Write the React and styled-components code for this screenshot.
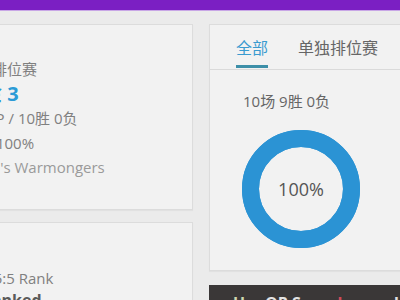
import styled, { createGlobalStyle } from 'styled-components';

const GlobalStyle = createGlobalStyle`
  body {
    margin: 0;
    background: #ebebeb;
    font-family: "Open Sans", "Noto Sans CJK SC", sans-serif;
    overflow: hidden;
  }
`;

const stats = [
  { label: '单独排位赛', kind: 'title' },
  { label: '白金 3', kind: 'tier' },
  { label: '100LP / 10胜 0负', kind: 'text' },
  { label: '胜率 100%', kind: 'text' },
  { label: "Riven's Warmongers", kind: 'league' },
];

const App = () => {
  const r = 50.5;
  const c = 2 * Math.PI * r;
  return (
    <>
      <GlobalStyle />
      <TopBar />
      <Main>
        <LeftColumn>
          <SummaryCard>
            {stats.map((s) => (
              <Line key={s.label} $kind={s.kind}>
                {s.label}
              </Line>
            ))}
          </SummaryCard>
          <FlexCard>
            <Line $kind="text">Flex 5:5 Rank</Line>
            <Unranked>Unranked</Unranked>
          </FlexCard>
        </LeftColumn>
        <RightColumn>
          <Card>
            <TabBar>
              <Tab $active>全部</Tab>
              <Tab>单独排位赛</Tab>
            </TabBar>
            <Body>
              <Record>10场 9胜 0负</Record>
              <Donut>
                <svg width="118" height="118" viewBox="0 0 118 118">
                  <circle cx="59" cy="59" r={r} fill="none" stroke="#2b93d4" strokeWidth="17" />
                  <circle
                    cx="59"
                    cy="59"
                    r={r}
                    fill="none"
                    stroke="#2b93d4"
                    strokeWidth="17"
                    strokeDasharray={`${c} ${c}`}
                  />
                </svg>
                <DonutLabel>100%</DonutLabel>
              </Donut>
            </Body>
          </Card>
          <DarkBar>
            <Badge>U</Badge>
            <Score>OP Score</Score>
            <Mark>l</Mark>
            <Rest>ranked</Rest>
          </DarkBar>
        </RightColumn>
      </Main>
    </>
  );
};
export default App;

const TopBar = styled.div`
  height: 10px;
  background: #7b1fc3;
  border-bottom: 1px solid #c8a6e6;
`;

const Main = styled.div`
  display: flex;
  gap: 16px;
  padding-top: 13px;
  margin-left: -100px;
`;

const LeftColumn = styled.div`
  width: 293px;
  flex-shrink: 0;
  display: flex;
  flex-direction: column;
  gap: 12px;
`;

const RightColumn = styled.div`
  width: 320px;
  flex-shrink: 0;
  display: flex;
  flex-direction: column;
  gap: 14px;
`;

const Card = styled.div`
  background: #f2f2f2;
  border: 1px solid #dcdcdc;
  box-shadow: 0 1px 1px rgba(0, 0, 0, 0.04);
`;

const SummaryCard = styled(Card)`
  padding: 32px 0 29px 61px;
`;

const FlexCard = styled(Card)`
  padding: 43px 0 20px 61px;
`;

const Line = styled.div`
  line-height: 24.5px;
  white-space: nowrap;
  font-size: ${(p) => (p.$kind === 'tier' ? '20px' : '15px')};
  font-weight: ${(p) => (p.$kind === 'tier' ? 700 : 400)};
  color: ${(p) =>
    p.$kind === 'tier' ? '#2c9bd6' : p.$kind === 'league' ? '#9a9a9a' : '#808080'};
`;

const Unranked = styled.div`
  font-size: 16px;
  font-weight: 700;
  color: #5a5a5a;
  line-height: 21px;
`;

const TabBar = styled.div`
  display: flex;
  gap: 30px;
  padding-left: 26px;
  border-bottom: 1px solid #dadada;
`;

const Tab = styled.div`
  font-size: 16px;
  line-height: 34px;
  padding-top: 6px;
  margin-bottom: 1px;
  color: ${(p) => (p.$active ? '#3a9bd0' : '#666')};
  border-bottom: 3px solid ${(p) => (p.$active ? '#3d8fa8' : 'transparent')};
`;

const Body = styled.div`
  padding: 21px 0 22px 32px;
`;

const Record = styled.div`
  font-size: 15px;
  line-height: 20px;
  color: #666;
  padding-left: 1px;
`;

const Donut = styled.div`
  position: relative;
  width: 118px;
  height: 118px;
  margin-top: 19px;
  svg {
    display: block;
  }
`;

const DonutLabel = styled.div`
  position: absolute;
  inset: 0;
  display: flex;
  align-items: center;
  justify-content: center;
  font-size: 18px;
  color: #555;
`;

const DarkBar = styled.div`
  display: flex;
  align-items: baseline;
  background: #3a3737;
  color: #e2e2e2;
  font-size: 16px;
  font-weight: 700;
  line-height: 18px;
  padding: 9px 0 12px 24px;
  white-space: nowrap;
`;

const Badge = styled.span`
  color: #cfd8b0;
  width: 32px;
`;

const Score = styled.span`
  margin-right: 2px;
`;

const Mark = styled.span`
  color: #d04a5a;
  margin-right: 24px;
`;

const Rest = styled.span`
  color: #e2e2e2;
`;
